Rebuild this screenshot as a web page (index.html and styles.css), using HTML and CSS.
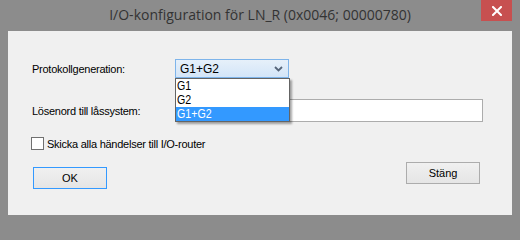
FILE: index.html
```html
<!DOCTYPE html>
<html lang="sv">
<head>
<meta charset="utf-8">
<title>I/O-konfiguration</title>
<link rel="stylesheet" href="styles.css">
</head>
<body>
<div class="window">
  <div class="titlebar">
    <span class="title">I/O-konfiguration för LN_R (0x0046; 00000780)</span>
    <button class="close" aria-label="Stäng">
      <svg width="10" height="10" viewBox="0 0 10 10"><path d="M1 1 L9 9 M9 1 L1 9" stroke="#fff" stroke-width="2" stroke-linecap="square"/></svg>
    </button>
  </div>
  <div class="client">
    <div class="form">
      <span class="lbl">Protokollgeneration:</span>
      <div class="combo">
        <span class="combo-text">G1+G2</span>
        <svg class="chev" width="9" height="6" viewBox="0 0 9 6"><path d="M1 1 L4.5 4.5 L8 1" fill="none" stroke="#56657a" stroke-width="1.8"/></svg>
        <ul class="droplist">
          <li class="item"><span>G1</span></li>
          <li class="item"><span>G2</span></li>
          <li class="item sel"><span>G1+G2</span></li>
        </ul>
      </div>
      <span class="lbl">Lösenord till låssystem:</span>
      <div class="input"></div>
    </div>
    <label class="check">
      <span class="box"></span>
      <span class="check-text">Skicka alla händelser till I/O-router</span>
    </label>
    <div class="buttons">
      <button class="btn default">OK</button>
      <button class="btn">Stäng</button>
    </div>
  </div>
</div>
</body>
</html>
```
FILE: styles.css
```css
html, body {
  margin: 0;
  padding: 0;
  background: #8c8c8c;
  height: 223px;
  overflow: hidden;
}
.window {
  width: 520px;
  height: 223px;
  background: #8c8c8c;
  box-sizing: border-box;
  display: flex;
  flex-direction: column;
  overflow: hidden;
}
.titlebar {
  height: 31px;
  flex: none;
  display: grid;
  grid-template-columns: 1fr auto 1fr;
  align-items: start;
}
.title {
  grid-column: 2;
  font-family: "Open Sans", "Noto Sans", sans-serif;
  font-size: 14px;
  color: #333333;
  line-height: 18px;
  padding-top: 6px;
  white-space: nowrap;
}
.close {
  grid-column: 3;
  justify-self: end;
  margin-right: 8px;
  width: 31px;
  height: 21px;
  border: 0;
  padding: 0;
  background: #c75050;
  display: flex;
  align-items: center;
  justify-content: center;
}
.client {
  margin: 0 8px;
  height: 184px;
  flex: none;
  background: #f0f0f0;
  padding: 28px 0 0 0;
  box-sizing: border-box;
  font-family: "Liberation Sans", Arial, sans-serif;
  font-size: 11px;
  letter-spacing: -0.25px;
  color: #000;
}
.form {
  display: grid;
  grid-template-columns: 143px auto;
  row-gap: 21px;
  padding-left: 24px;
  align-items: center;
}
.lbl {
  white-space: nowrap;
}
.combo {
  position: relative;
  width: 114px;
  height: 19px;
  box-sizing: border-box;
  border: 1px solid #7eb4ea;
  background: linear-gradient(#e6f0fa, #d3e5f8);
  display: flex;
  align-items: center;
  justify-content: space-between;
  padding: 0 5px 0 4px;
}
.combo-text {
  font-size: 12px;
  letter-spacing: 0;
}
.chev {
  margin-top: 1px;
}
.droplist {
  position: absolute;
  left: -1px;
  top: 18px;
  width: 115px;
  margin: 0;
  padding: 0;
  list-style: none;
  background: #fff;
  border: 1px solid #646464;
  box-sizing: border-box;
  box-shadow: 2px 2px 2px rgba(0,0,0,0.35);
  z-index: 2;
}
.item {
  height: 14px;
  line-height: 14px;
  padding-left: 1px;
  font-size: 13px;
  letter-spacing: 0;
  color: #000;
  overflow: hidden;
}
.item span {
  display: inline-block;
  transform: scaleX(0.82);
  transform-origin: left center;
}
.item.sel {
  background: #3399ff;
  color: #fff;
}
.input {
  width: 308px;
  height: 23px;
  box-sizing: border-box;
  border: 1px solid #acacac;
  background: #fff;
}
.check {
  display: flex;
  align-items: center;
  gap: 3px;
  margin: 15px 0 0 23px;
  height: 13px;
}
.box {
  width: 13px;
  height: 13px;
  box-sizing: border-box;
  border: 1px solid #707070;
  background: #fff;
}
.check-text {
  white-space: nowrap;
}
.buttons {
  display: flex;
  justify-content: space-between;
  align-items: flex-start;
  margin-top: 12px;
  padding: 0 32px 0 25px;
}
.btn {
  width: 74px;
  height: 22px;
  box-sizing: border-box;
  border: 1px solid #acacac;
  background: linear-gradient(#f0f0f0, #e5e5e5);
  font-family: "Liberation Sans", Arial, sans-serif;
  font-size: 11px;
  color: #000;
  padding: 0;
}
.btn.default {
  margin-top: 5px;
  border-color: #3399ff;
}
```
